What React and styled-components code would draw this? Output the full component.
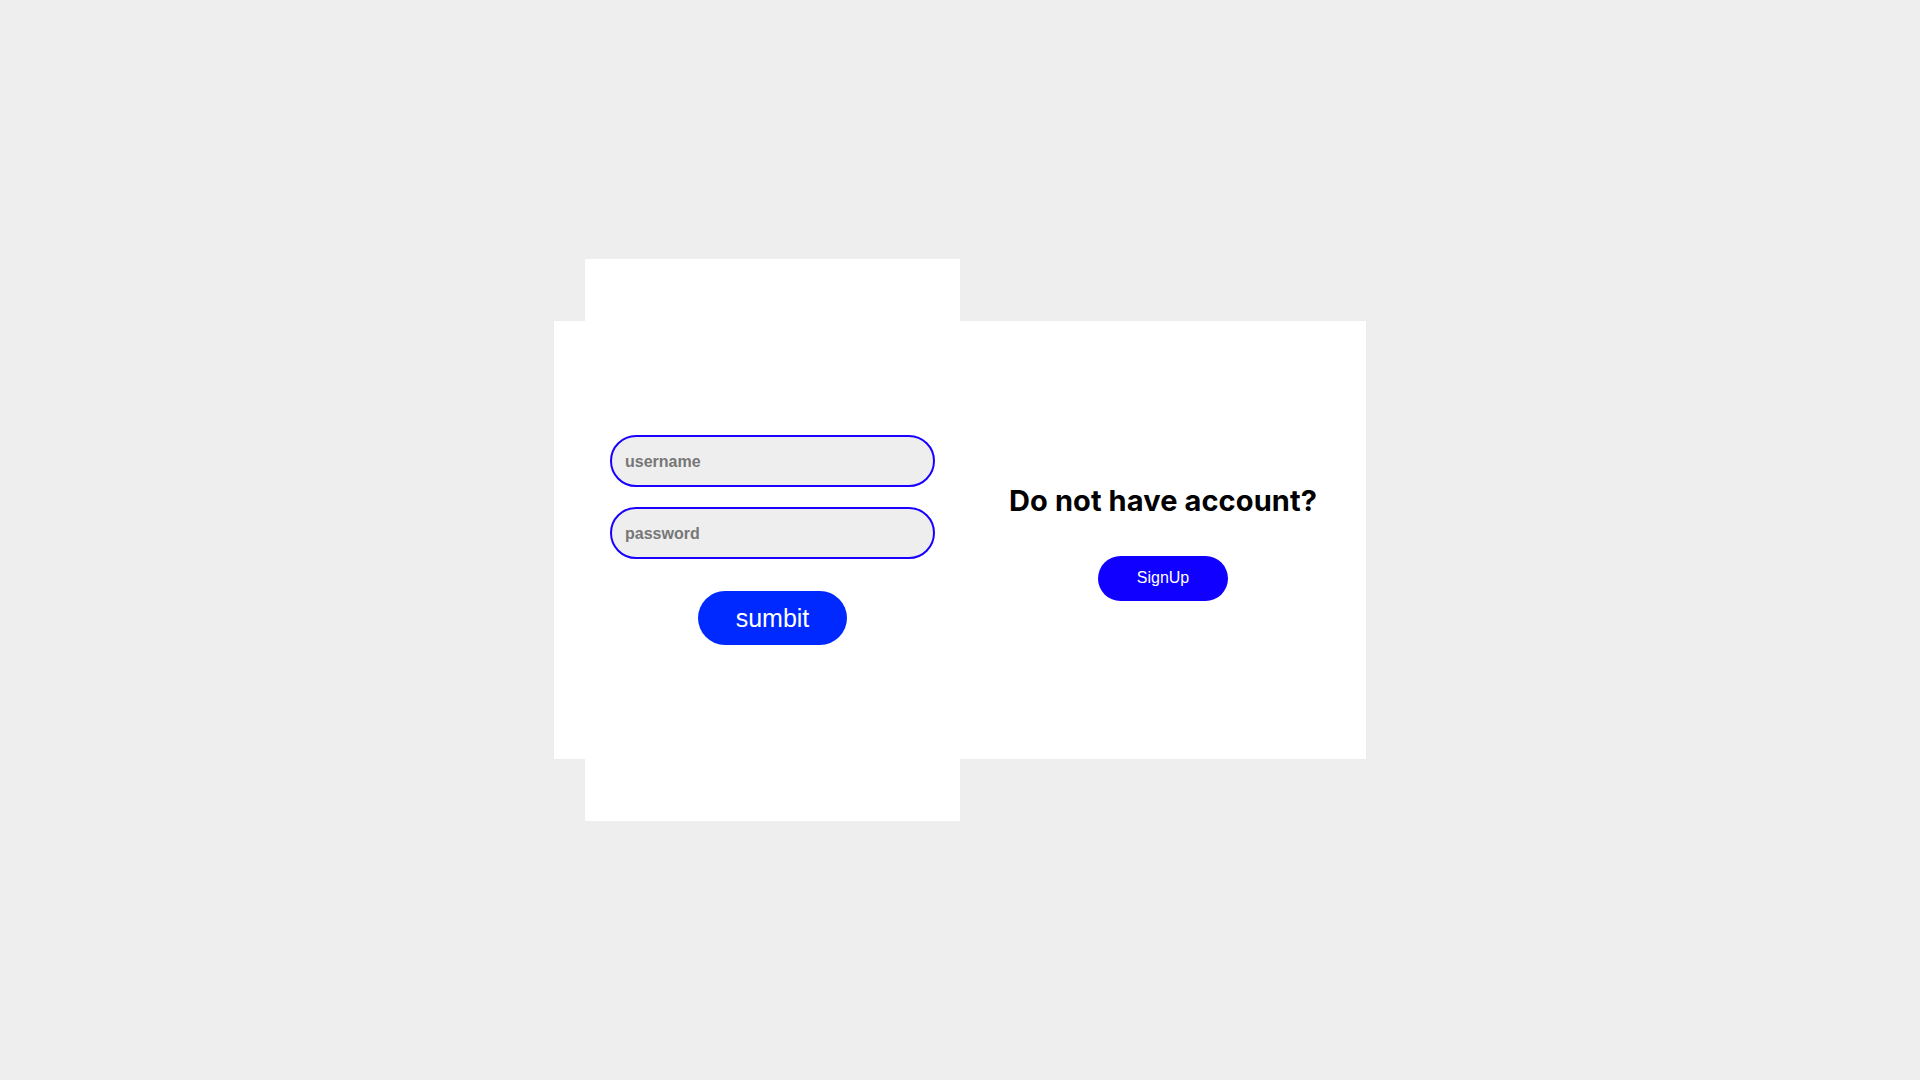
import React from 'react';
import styled, { createGlobalStyle } from 'styled-components';

const GlobalStyle = createGlobalStyle`
  * {
    box-sizing: border-box;
  }
  html, body {
    margin: 0;
    padding: 0;
  }
  body {
    background: #eeeeee;
    font-family: 'Liberation Sans', Arial, sans-serif;
  }
`;

const Page = styled.div`
  min-height: 100vh;
  display: flex;
  align-items: center;
  justify-content: center;
`;

const Container = styled.div`
  width: 812px;
  height: 438px;
  background: #fff;
  display: flex;
`;

const LeftSide = styled.div`
  width: 406px;
  display: flex;
  justify-content: flex-end;
  align-items: center;
`;

const FormCard = styled.form`
  width: 375px;
  height: 562px;
  flex-shrink: 0;
  background: #fff;
  padding: 0 25px;
  display: flex;
  flex-direction: column;
  justify-content: center;
  align-items: center;
`;

const Input = styled.input`
  width: 100%;
  height: 52px;
  margin-bottom: ${({ last }) => last ? '32px' : '20px'};
  padding: 2px 13px 0;
  border: 2px solid #1a00ff;
  border-radius: 26px;
  background: #eeeeee;
  outline: none;
  font-family: 'Liberation Sans', Arial, sans-serif;
  font-size: 16px;
  font-weight: 700;
  color: #333;
  &::placeholder {
    color: #777;
  }
`;

const SubmitButton = styled.button`
  width: 149px;
  height: 54px;
  border: none;
  border-radius: 27px;
  background: #0029ff;
  color: #fff;
  font-family: 'Liberation Sans', Arial, sans-serif;
  font-size: 25px;
  cursor: pointer;
`;

const RightSide = styled.div`
  width: 406px;
  padding-top: 3px;
  display: flex;
  flex-direction: column;
  align-items: center;
  justify-content: center;
`;

const Heading = styled.h2`
  margin: 0 0 38px;
  font-family: Inter, 'Noto Sans', sans-serif;
  font-size: 29px;
  font-weight: 700;
  color: #000;
  letter-spacing: 0.1px;
`;

const SignUpButton = styled.button`
  width: 130px;
  height: 45px;
  border: none;
  border-radius: 23px;
  background: #1000ff;
  color: #fff;
  font-family: 'Liberation Sans', Arial, sans-serif;
  font-size: 16px;
  cursor: pointer;
`;

const App = () => (
  <Page>
    <GlobalStyle />
    <Container>
      <LeftSide>
        <FormCard onSubmit={e => e.preventDefault()}>
          <Input type="text" placeholder="username" />
          <Input type="password" placeholder="password" last />
          <SubmitButton type="submit">sumbit</SubmitButton>
        </FormCard>
      </LeftSide>
      <RightSide>
        <Heading>Do not have account?</Heading>
        <SignUpButton type="button">SignUp</SignUpButton>
      </RightSide>
    </Container>
  </Page>
);

export default App;
